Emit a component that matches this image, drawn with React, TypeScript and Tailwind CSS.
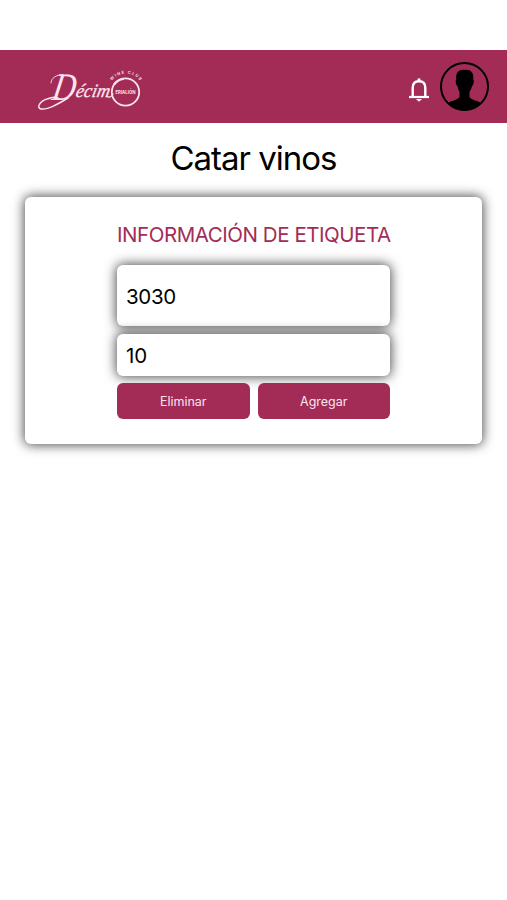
function Logo() {
	return (
		<svg width="108" height="46" viewBox="0 0 108 46" fill="none" stroke="#fbe4ee" strokeLinecap="round">
			{/* swash under the name */}
			<path d="M13 19C13 14 18 11 25 10.5" strokeWidth="0.9" />
			<path d="M30 34C20 40 10 46 3 45C-2 44 2 37 9 35C14 33 18 33 20 34" strokeWidth="1.5" />
			<g fill="#fbe4ee" stroke="none" fontFamily="'Liberation Serif', serif" fontStyle="italic">
				<text transform="translate(13 36) skewX(-10)" fontSize="39" textLength="23" lengthAdjust="spacingAndGlyphs">D</text>
				<text
					transform="translate(37 33) skewX(-12)"
					fontSize="19"
					textLength="34"
					lengthAdjust="spacingAndGlyphs"
					stroke="#fbe4ee"
					strokeWidth="0.3"
				>
					écim
				</text>
			</g>
			<circle cx="87.5" cy="28" r="13.7" strokeWidth="1.8" />
			<path d="M76.5 20C79 17 82 15.5 85 15" strokeWidth="2.2" />
			<path d="M70 33C72 33.5 74 32 75 30" strokeWidth="1.2" />
			<g fill="#fbe4ee" stroke="none" fontFamily="Inter, sans-serif">
				<text x="77.5" y="29.8" fontSize="5" fontWeight="700" textLength="20" lengthAdjust="spacingAndGlyphs">ERIALIÓN</text>
				<path id="arc" d="M74 16.5A17.5 17.5 0 0 1 104 20" fill="none" />
				<text fontSize="4" fontWeight="600" letterSpacing="1.2">
					<textPath href="#arc">WINE CLUB</textPath>
				</text>
			</g>
		</svg>
	);
}

function Header() {
	return (
		<header className="bg-[#a32c57] h-[73px] flex items-center justify-between pl-[38px] pr-[18px]">
			<Logo />
			<div className="flex items-center gap-[10px]">
				<svg className="mt-[6px]" width="22" height="24" viewBox="0 0 22 24" fill="none" stroke="#fff">
					<path d="M4.7 18.5V9.8C4.7 5.5 7 3.2 11 3.2S17.3 5.5 17.3 9.8V18.5" strokeWidth="2.4" />
					<path d="M1 19H21" strokeWidth="2.2" />
					<path d="M11 0.5V3" strokeWidth="2.8" />
					<path d="M8 21H14L11 23.8Z" fill="#fff" stroke="none" />
				</svg>
				<svg width="49" height="49" viewBox="0 0 49 49">
					<circle cx="24.5" cy="24.5" r="23.5" fill="none" stroke="#000" strokeWidth="2" />
					<path d="M24.5 8C18.5 7 15.5 11 16.2 18C15 18 16 24 17.5 24C18 27 19 29 19.5 30V35C17 38.5 11 38.5 8 41C17 51 32 51 41 41C38 38.5 32 38.5 29.5 35V30C30 29 31.5 27 32 24C33.5 24 34.5 18 33.3 18C34 11 31 7 24.5 8Z" />
				</svg>
			</div>
		</header>
	);
}

function App() {
	return (
		<main className="bg-white h-screen pt-[50px] overflow-hidden font-[Inter,sans-serif] text-black">
			<Header />
			<h1 className="text-center text-[33px] leading-[70px] h-[74px] tracking-[-1px]">Catar vinos</h1>
			<section className="mx-[25px] h-[247px] rounded-md bg-white px-[92px] pt-[26px] shadow-[0_0_12px_1px_rgba(0,0,0,0.7)]">
				<h2 className="text-[#a32c57] text-[20.5px] leading-[24px] whitespace-nowrap text-center tracking-[-0.45px]">
					INFORMACIÓN DE ETIQUETA
				</h2>
				<div className="mt-[18px] flex flex-col gap-2">
					<input
						type="text"
						defaultValue="3030"
						className="w-full h-[61px] rounded-md bg-white px-[9px] pt-[2px] text-[20.5px] tracking-[-0.3px] shadow-[0_0_12px_1px_rgba(0,0,0,0.7)]"
					/>
					<input
						type="text"
						defaultValue="10"
						className="w-full h-[42px] rounded-md bg-white px-[9px] text-[20.5px] shadow-[0_0_12px_1px_rgba(0,0,0,0.7)]"
					/>
				</div>
				<div className="relative mt-[7px] grid grid-cols-2 gap-2">
					<button className="h-[36px] rounded-md bg-[#a32c57] pt-[2px] text-[#fbe4ee] text-[12.5px]">Eliminar</button>
					<button className="h-[36px] rounded-md bg-[#a32c57] pt-[2px] text-[#fbe4ee] text-[12.5px]">Agregar</button>
				</div>
			</section>
		</main>
	);
}

export default App;
